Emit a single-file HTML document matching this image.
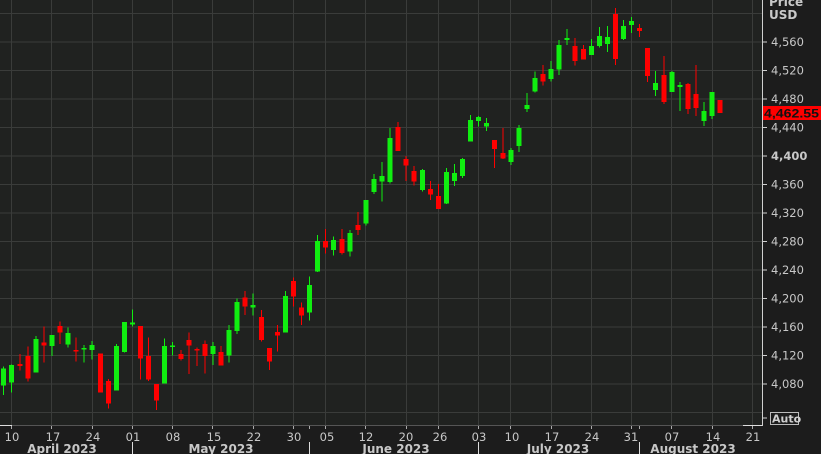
<!DOCTYPE html>
<html><head><meta charset="utf-8"><style>
html,body{margin:0;padding:0;background:#1c1c1c;width:821px;height:454px;overflow:hidden}
svg{display:block}
text{font-family:"DejaVu Sans","Liberation Sans",sans-serif}
</style></head><body>
<svg width="821" height="454" viewBox="0 0 821 454" xmlns="http://www.w3.org/2000/svg" shape-rendering="crispEdges">
<rect x="0" y="0" width="821" height="454" fill="#1c1c1c"/>
<rect x="0" y="0" width="763" height="425" fill="#202220"/>
<g stroke="#3a3c3a" stroke-width="1">
<line x1="0" y1="13.5" x2="763" y2="13.5"/><line x1="0" y1="42" x2="763" y2="42"/><line x1="0" y1="70.5" x2="763" y2="70.5"/><line x1="0" y1="99" x2="763" y2="99"/><line x1="0" y1="127.5" x2="763" y2="127.5"/><line x1="0" y1="156" x2="763" y2="156"/><line x1="0" y1="184.5" x2="763" y2="184.5"/><line x1="0" y1="213" x2="763" y2="213"/><line x1="0" y1="241.5" x2="763" y2="241.5"/><line x1="0" y1="270" x2="763" y2="270"/><line x1="0" y1="298.5" x2="763" y2="298.5"/><line x1="0" y1="327" x2="763" y2="327"/><line x1="0" y1="355.5" x2="763" y2="355.5"/><line x1="0" y1="384" x2="763" y2="384"/><line x1="0" y1="412.5" x2="763" y2="412.5"/>
<line x1="11.5" y1="0" x2="11.5" y2="425"/><line x1="51.5" y1="0" x2="51.5" y2="425"/><line x1="92.5" y1="0" x2="92.5" y2="425"/><line x1="132.5" y1="0" x2="132.5" y2="425"/><line x1="172.5" y1="0" x2="172.5" y2="425"/><line x1="212.5" y1="0" x2="212.5" y2="425"/><line x1="253.5" y1="0" x2="253.5" y2="425"/><line x1="293.5" y1="0" x2="293.5" y2="425"/><line x1="325.5" y1="0" x2="325.5" y2="425"/><line x1="365.5" y1="0" x2="365.5" y2="425"/><line x1="406.5" y1="0" x2="406.5" y2="425"/><line x1="438.5" y1="0" x2="438.5" y2="425"/><line x1="478.5" y1="0" x2="478.5" y2="425"/><line x1="510.5" y1="0" x2="510.5" y2="425"/><line x1="551.5" y1="0" x2="551.5" y2="425"/><line x1="591.5" y1="0" x2="591.5" y2="425"/><line x1="631.5" y1="0" x2="631.5" y2="425"/><line x1="671.5" y1="0" x2="671.5" y2="425"/><line x1="712.5" y1="0" x2="712.5" y2="425"/><line x1="752.5" y1="0" x2="752.5" y2="425"/>
</g>
<g fill="#10ee10">
<rect x="3.15" y="366.7" width="1" height="28.3"/><rect x="1.15" y="368.3" width="5" height="17.4"/>
<rect x="11.2" y="364.3" width="1" height="28.4"/><rect x="9.2" y="365" width="5" height="17.7"/>
<rect x="35.35" y="336" width="1" height="36.7"/><rect x="33.35" y="339" width="5" height="33.7"/>
<rect x="51.45" y="335" width="1" height="21"/><rect x="49.45" y="335" width="5" height="11"/>
<rect x="67.55" y="327.3" width="1" height="20.4"/><rect x="65.55" y="333" width="5" height="11.7"/>
<rect x="83.65" y="345" width="1" height="17.7"/><rect x="81.65" y="348" width="5" height="1.7"/>
<rect x="91.7" y="341" width="1" height="18.3"/><rect x="89.7" y="345" width="5" height="5"/>
<rect x="115.85" y="344" width="1" height="46.7"/><rect x="113.85" y="346" width="5" height="44.7"/>
<rect x="123.9" y="322" width="1" height="30.7"/><rect x="121.9" y="322" width="5" height="30"/>
<rect x="131.95" y="309.3" width="1" height="17.4"/><rect x="129.95" y="322.7" width="5" height="2"/>
<rect x="164.15" y="338.3" width="1" height="45.4"/><rect x="162.15" y="346" width="5" height="37.7"/>
<rect x="172.2" y="342" width="1" height="13.7"/><rect x="170.2" y="345.3" width="5" height="1.7"/>
<rect x="212.45" y="342" width="1" height="23"/><rect x="210.45" y="346" width="5" height="8"/>
<rect x="228.55" y="325" width="1" height="37.7"/><rect x="226.55" y="330" width="5" height="25.7"/>
<rect x="236.6" y="298.7" width="1" height="35.3"/><rect x="234.6" y="302" width="5" height="29"/>
<rect x="252.7" y="293.3" width="1" height="22.4"/><rect x="250.7" y="305" width="5" height="2.3"/>
<rect x="284.9" y="291" width="1" height="41.7"/><rect x="282.9" y="296" width="5" height="36.7"/>
<rect x="309.05" y="276.7" width="1" height="44"/><rect x="307.05" y="285" width="5" height="27.7"/>
<rect x="317.1" y="235" width="1" height="37"/><rect x="315.1" y="241" width="5" height="30.7"/>
<rect x="333.2" y="236.7" width="1" height="19"/><rect x="331.2" y="240" width="5" height="10"/>
<rect x="349.3" y="230" width="1" height="26.7"/><rect x="347.3" y="233" width="5" height="18.7"/>
<rect x="365.4" y="200" width="1" height="25.7"/><rect x="363.4" y="200" width="5" height="23.3"/>
<rect x="373.45" y="174" width="1" height="20"/><rect x="371.45" y="179" width="5" height="13"/>
<rect x="381.5" y="162" width="1" height="39.7"/><rect x="379.5" y="176" width="5" height="5.7"/>
<rect x="389.55" y="128" width="1" height="55.3"/><rect x="387.55" y="138" width="5" height="44"/>
<rect x="421.75" y="169" width="1" height="22.7"/><rect x="419.75" y="170" width="5" height="20"/>
<rect x="445.9" y="168" width="1" height="36"/><rect x="443.9" y="172" width="5" height="31.3"/>
<rect x="453.95" y="164" width="1" height="22"/><rect x="451.95" y="173" width="5" height="8"/>
<rect x="462" y="158" width="1" height="20"/><rect x="460" y="159" width="5" height="17"/>
<rect x="470.05" y="115" width="1" height="26.7"/><rect x="468.05" y="120" width="5" height="21.7"/>
<rect x="478.1" y="116" width="1" height="10.7"/><rect x="476.1" y="117" width="5" height="4"/>
<rect x="486.15" y="118" width="1" height="13"/><rect x="484.15" y="123" width="5" height="3.7"/>
<rect x="510.3" y="148" width="1" height="17"/><rect x="508.3" y="150" width="5" height="12"/>
<rect x="518.35" y="125" width="1" height="27"/><rect x="516.35" y="128" width="5" height="18"/>
<rect x="526.4" y="93" width="1" height="19"/><rect x="524.4" y="105" width="5" height="4"/>
<rect x="534.45" y="71.7" width="1" height="20.6"/><rect x="532.45" y="78" width="5" height="13.7"/>
<rect x="550.55" y="61" width="1" height="20.7"/><rect x="548.55" y="69" width="5" height="10"/>
<rect x="558.6" y="40" width="1" height="35"/><rect x="556.6" y="45" width="5" height="24.7"/>
<rect x="566.65" y="29" width="1" height="16"/><rect x="564.65" y="38" width="5" height="2"/>
<rect x="590.8" y="39" width="1" height="16"/><rect x="588.8" y="46" width="5" height="9"/>
<rect x="598.85" y="27" width="1" height="20.7"/><rect x="596.85" y="36" width="5" height="10"/>
<rect x="606.9" y="26" width="1" height="26"/><rect x="604.9" y="37" width="5" height="7"/>
<rect x="623" y="20" width="1" height="20"/><rect x="621" y="26" width="5" height="13"/>
<rect x="631.05" y="17" width="1" height="16"/><rect x="629.05" y="21" width="5" height="4"/>
<rect x="655.2" y="71" width="1" height="25"/><rect x="653.2" y="83" width="5" height="7"/>
<rect x="671.3" y="71" width="1" height="21"/><rect x="669.3" y="72" width="5" height="20"/>
<rect x="679.35" y="82" width="1" height="29"/><rect x="677.35" y="85" width="5" height="2"/>
<rect x="703.5" y="102" width="1" height="24"/><rect x="701.5" y="111" width="5" height="10"/>
<rect x="711.55" y="92" width="1" height="27"/><rect x="709.55" y="92" width="5" height="24"/>
</g>
<g fill="#ff0000">
<rect x="19.25" y="354" width="1" height="16.7"/><rect x="17.25" y="364" width="5" height="2"/>
<rect x="27.3" y="346.7" width="1" height="35"/><rect x="25.3" y="356" width="5" height="22.7"/>
<rect x="43.4" y="326.7" width="1" height="36"/><rect x="41.4" y="342.7" width="5" height="3"/>
<rect x="59.5" y="321.7" width="1" height="22.3"/><rect x="57.5" y="326" width="5" height="6.7"/>
<rect x="75.6" y="337.3" width="1" height="24.4"/><rect x="73.6" y="350" width="5" height="1.7"/>
<rect x="99.75" y="353.3" width="1" height="39.4"/><rect x="97.75" y="353.3" width="5" height="39.4"/>
<rect x="107.8" y="379" width="1" height="29.3"/><rect x="105.8" y="381" width="5" height="22.3"/>
<rect x="140" y="326" width="1" height="53.3"/><rect x="138" y="326" width="5" height="32.7"/>
<rect x="148.05" y="337.3" width="1" height="43.7"/><rect x="146.05" y="356" width="5" height="23.3"/>
<rect x="156.1" y="384" width="1" height="26"/><rect x="154.1" y="384" width="5" height="16.7"/>
<rect x="180.25" y="350" width="1" height="10.7"/><rect x="178.25" y="354" width="5" height="5"/>
<rect x="188.3" y="332.7" width="1" height="41.3"/><rect x="186.3" y="340" width="5" height="5.7"/>
<rect x="196.35" y="347.3" width="1" height="18.7"/><rect x="194.35" y="349" width="5" height="1.7"/>
<rect x="204.4" y="340.3" width="1" height="33"/><rect x="202.4" y="344" width="5" height="12"/>
<rect x="220.5" y="346" width="1" height="19.7"/><rect x="218.5" y="352" width="5" height="13.7"/>
<rect x="244.65" y="291" width="1" height="24"/><rect x="242.65" y="297.3" width="5" height="9.4"/>
<rect x="260.75" y="310" width="1" height="31.7"/><rect x="258.75" y="317" width="5" height="23"/>
<rect x="268.8" y="348" width="1" height="22"/><rect x="266.8" y="348" width="5" height="13.7"/>
<rect x="276.85" y="325" width="1" height="26.7"/><rect x="274.85" y="332" width="5" height="3.3"/>
<rect x="292.95" y="277.3" width="1" height="29.4"/><rect x="290.95" y="281" width="5" height="15.7"/>
<rect x="301" y="302.7" width="1" height="22.3"/><rect x="299" y="307.3" width="5" height="8.4"/>
<rect x="325.15" y="229" width="1" height="24.3"/><rect x="323.15" y="241" width="5" height="6.7"/>
<rect x="341.25" y="229" width="1" height="25.3"/><rect x="339.25" y="239" width="5" height="14"/>
<rect x="357.35" y="212" width="1" height="23"/><rect x="355.35" y="225" width="5" height="5"/>
<rect x="397.6" y="122" width="1" height="29"/><rect x="395.6" y="127" width="5" height="24"/>
<rect x="405.65" y="156" width="1" height="25"/><rect x="403.65" y="159" width="5" height="6.7"/>
<rect x="413.7" y="166" width="1" height="19.7"/><rect x="411.7" y="171" width="5" height="10.7"/>
<rect x="429.8" y="181" width="1" height="19"/><rect x="427.8" y="189" width="5" height="5.7"/>
<rect x="437.85" y="184" width="1" height="25"/><rect x="435.85" y="196" width="5" height="13"/>
<rect x="494.2" y="140" width="1" height="28"/><rect x="492.2" y="140" width="5" height="9"/>
<rect x="502.25" y="128" width="1" height="31"/><rect x="500.25" y="153" width="5" height="5.3"/>
<rect x="542.5" y="65" width="1" height="20.7"/><rect x="540.5" y="74" width="5" height="7.7"/>
<rect x="574.7" y="38" width="1" height="27.7"/><rect x="572.7" y="46" width="5" height="15"/>
<rect x="582.75" y="45" width="1" height="14.7"/><rect x="580.75" y="49" width="5" height="10.7"/>
<rect x="614.95" y="8" width="1" height="57"/><rect x="612.95" y="14" width="5" height="45"/>
<rect x="639.1" y="24" width="1" height="13"/><rect x="637.1" y="28" width="5" height="3"/>
<rect x="647.15" y="48" width="1" height="34"/><rect x="645.15" y="48" width="5" height="28"/>
<rect x="663.25" y="56" width="1" height="48"/><rect x="661.25" y="75" width="5" height="27"/>
<rect x="687.4" y="83" width="1" height="31"/><rect x="685.4" y="84" width="5" height="25"/>
<rect x="695.45" y="65" width="1" height="51"/><rect x="693.45" y="94" width="5" height="14"/>
<rect x="717.6" y="100" width="5" height="13"/>
</g>
<line x1="0" y1="425.5" x2="763" y2="425.5" stroke="#555" stroke-width="1"/>
<line x1="0" y1="425.5" x2="12" y2="425.5" stroke="#ddd" stroke-width="1"/>
<line x1="743" y1="425.5" x2="763" y2="425.5" stroke="#ddd" stroke-width="1"/>
<line x1="762.5" y1="0" x2="762.5" y2="426" stroke="#cfcfcf" stroke-width="1"/>
<g stroke="#cfcfcf" stroke-width="1">
<line x1="763" y1="42" x2="767" y2="42"/><line x1="763" y1="70.5" x2="767" y2="70.5"/><line x1="763" y1="99" x2="767" y2="99"/><line x1="763" y1="127.5" x2="767" y2="127.5"/><line x1="763" y1="156" x2="767" y2="156"/><line x1="763" y1="184.5" x2="767" y2="184.5"/><line x1="763" y1="213" x2="767" y2="213"/><line x1="763" y1="241.5" x2="767" y2="241.5"/><line x1="763" y1="270" x2="767" y2="270"/><line x1="763" y1="298.5" x2="767" y2="298.5"/><line x1="763" y1="327" x2="767" y2="327"/><line x1="763" y1="355.5" x2="767" y2="355.5"/><line x1="763" y1="384" x2="767" y2="384"/><line x1="763" y1="418" x2="767" y2="418"/>
</g>
<g fill="#c8c8c8" font-size="11.5">
<text x="769" y="6" font-weight="bold" font-size="12">Price</text>
<text x="769" y="19" font-weight="bold" font-size="12">USD</text>
<text x="771" y="46">4,560</text><text x="771" y="74.5">4,520</text><text x="771" y="103">4,480</text><text x="771" y="131.5">4,440</text>
<text x="771" y="160" font-weight="bold">4,400</text><text x="771" y="188.5">4,360</text><text x="771" y="217">4,320</text><text x="771" y="245.5">4,280</text><text x="771" y="274">4,240</text><text x="771" y="302.5">4,200</text><text x="771" y="331">4,160</text><text x="771" y="359.5">4,120</text><text x="771" y="388">4,080</text>
</g>
<rect x="763" y="106" width="58" height="14" fill="#ff0000"/>
<text x="764" y="117.5" font-size="12" font-weight="bold" fill="#111" style="font-family:'Liberation Sans',sans-serif" textLength="55" lengthAdjust="spacingAndGlyphs">4,462.55</text>
<rect x="770.5" y="412.5" width="28" height="12" fill="none" stroke="#bbb" stroke-width="1"/>
<text x="772" y="422.5" font-size="11" font-weight="bold" fill="#d0d0d0">Auto</text>
<g stroke="#aaa" stroke-width="1">
<line x1="11.5" y1="426" x2="11.5" y2="429"/><line x1="51.5" y1="426" x2="51.5" y2="429"/><line x1="92.5" y1="426" x2="92.5" y2="429"/><line x1="132.5" y1="426" x2="132.5" y2="429"/><line x1="172.5" y1="426" x2="172.5" y2="429"/><line x1="212.5" y1="426" x2="212.5" y2="429"/><line x1="253.5" y1="426" x2="253.5" y2="429"/><line x1="293.5" y1="426" x2="293.5" y2="429"/><line x1="309.5" y1="426" x2="309.5" y2="429"/><line x1="325.5" y1="426" x2="325.5" y2="429"/><line x1="365.5" y1="426" x2="365.5" y2="429"/><line x1="406.5" y1="426" x2="406.5" y2="429"/><line x1="438.5" y1="426" x2="438.5" y2="429"/><line x1="478.5" y1="426" x2="478.5" y2="429"/><line x1="510.5" y1="426" x2="510.5" y2="429"/><line x1="551.5" y1="426" x2="551.5" y2="429"/><line x1="591.5" y1="426" x2="591.5" y2="429"/><line x1="631.5" y1="426" x2="631.5" y2="429"/><line x1="639.5" y1="426" x2="639.5" y2="429"/><line x1="671.5" y1="426" x2="671.5" y2="429"/><line x1="712.5" y1="426" x2="712.5" y2="429"/><line x1="752.5" y1="426" x2="752.5" y2="429"/>
<line x1="132.5" y1="442" x2="132.5" y2="454" stroke="#ddd"/><line x1="309.5" y1="442" x2="309.5" y2="454" stroke="#ddd"/><line x1="478.5" y1="442" x2="478.5" y2="454" stroke="#ddd"/><line x1="639.5" y1="442" x2="639.5" y2="454" stroke="#ddd"/>
</g>
<g fill="#c8c8c8" font-size="11.5" text-anchor="middle">
<text x="12" y="441">10</text><text x="53" y="441">17</text><text x="93" y="441">24</text><text x="133" y="441">01</text><text x="173" y="441">08</text><text x="214" y="441">15</text><text x="254" y="441">22</text><text x="294" y="441">30</text><text x="327" y="441">05</text><text x="366" y="441">12</text><text x="406" y="441">20</text><text x="440" y="441">26</text><text x="479" y="441">03</text><text x="512" y="441">10</text><text x="552" y="441">17</text><text x="592" y="441">24</text><text x="631" y="441">31</text><text x="672" y="441">07</text><text x="713" y="441">14</text><text x="753" y="441">21</text>
</g>
<g fill="#c8c8c8" font-size="12" font-weight="bold" text-anchor="middle">
<text x="62" y="453">April 2023</text><text x="221" y="453">May 2023</text><text x="396" y="453">June 2023</text><text x="558" y="453">July 2023</text><text x="693" y="453">August 2023</text>
</g>
</svg>
</body></html>
